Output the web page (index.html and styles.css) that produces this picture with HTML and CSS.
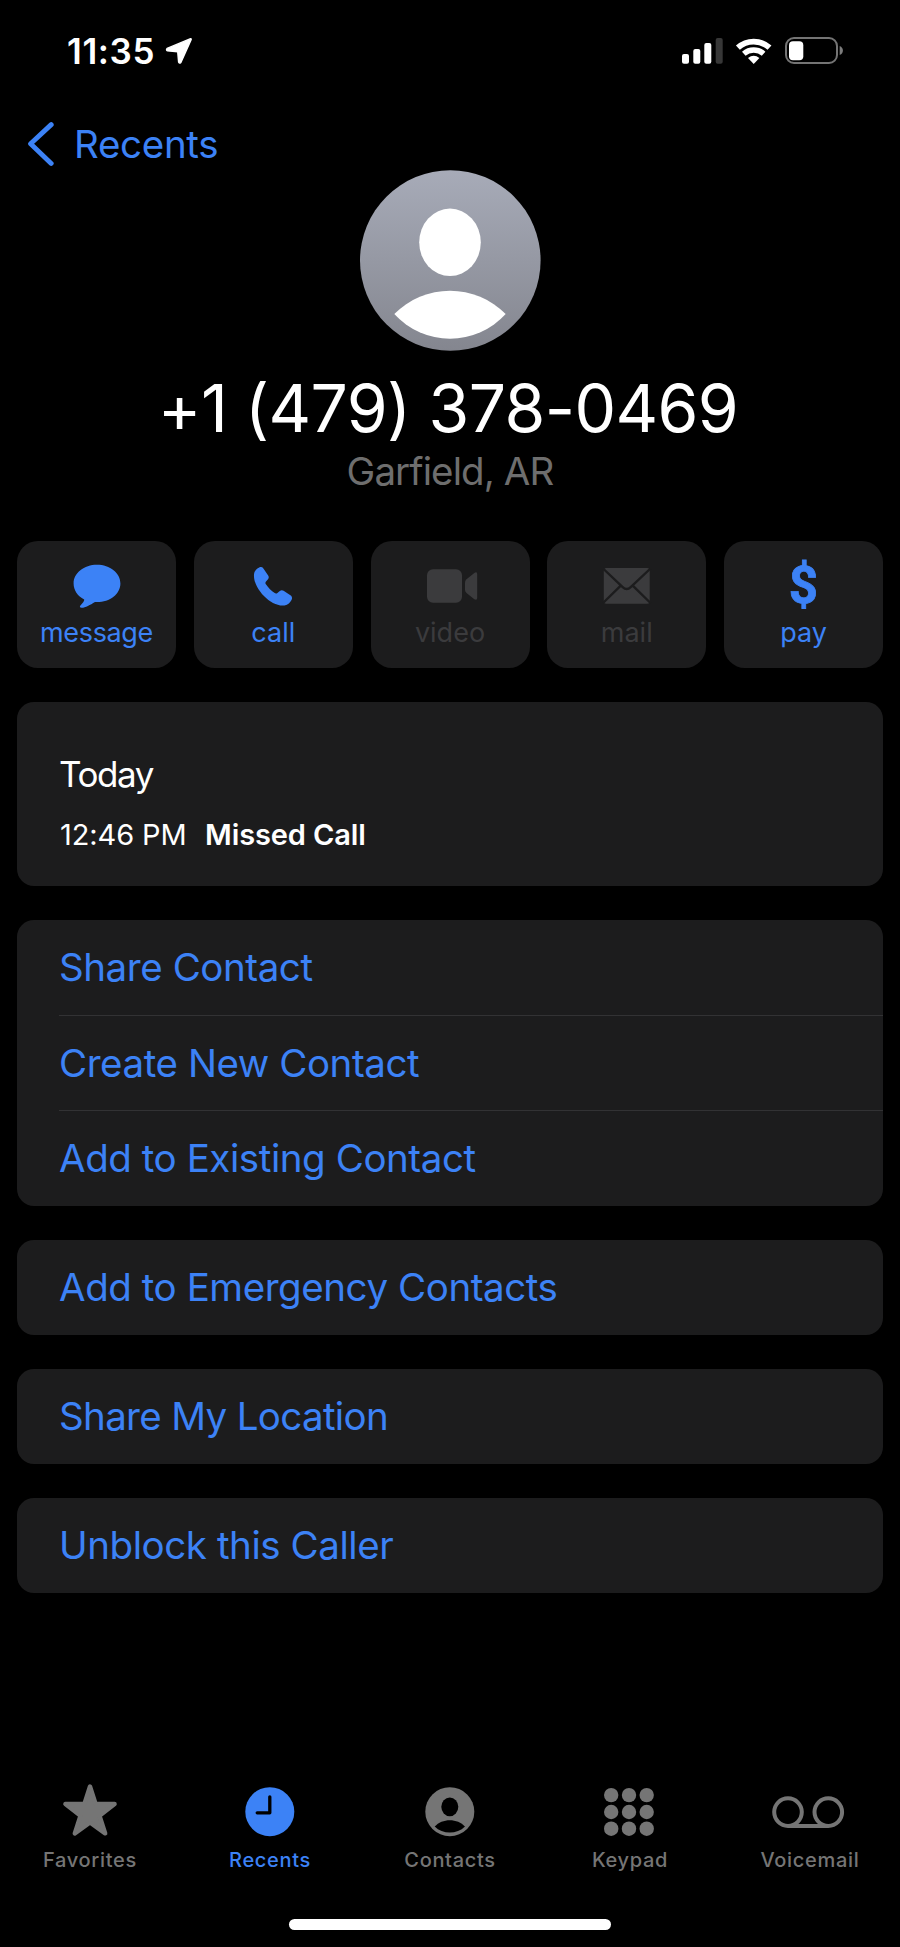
FILE: index.html
```html
<!DOCTYPE html>
<html lang="en">
<head>
<meta charset="utf-8">
<title>Recents</title>
<link rel="stylesheet" href="styles.css">
</head>
<body>
<div class="screen">
  <header class="status">
    <span class="time">11:35</span>
    <svg class="location" width="28" height="28" viewBox="0 0 28 28"><path d="M25.6 1.7 2.1 11.4Q.7 13 2.6 13.9L12.7 14.7 13.6 25Q14.3 27 15.9 25.4L26 3Q26.6 1.6 25.6 1.7Z" fill="#fff" stroke="#fff" stroke-width="1.4" stroke-linejoin="round"/></svg>
    <svg class="signals" width="162" height="28" viewBox="0 0 162 28">
      <g fill="#fff"><rect x="0" y="17" width="7" height="9.7" rx="2"/><rect x="11.3" y="12" width="7" height="14.7" rx="2"/><rect x="22.3" y="6" width="7" height="20.7" rx="2"/></g>
      <rect x="33.7" y="1" width="7" height="25.7" rx="2" fill="#373737"/>
      <g fill="none" stroke="#fff"><path d="M55.9 10.7A23.4 23.4 0 0 1 87.5 10.7" stroke-width="5.8"/><path d="M61.8 16.7A14.9 14.9 0 0 1 81.6 16.7" stroke-width="5.4"/></g>
      <path d="M71.7 27 66 21Q71.7 16.6 77.4 21Z" fill="#fff"/>
      <rect x="104" y="1" width="51" height="25" rx="8" fill="none" stroke="#747474" stroke-width="2"/>
      <rect x="107" y="4.3" width="14.3" height="19" rx="4" fill="#fff"/>
      <path d="M157.7 9Q160.9 10.5 160.9 13.5T157.7 18Z" fill="#7c7c7c"/>
    </svg>
  </header>
  <nav class="nav">
    <svg width="28" height="44" viewBox="0 0 28 44"><path d="M25.2 2.6 4.6 21.8 25.2 41.4" fill="none" stroke="#3c82f6" stroke-width="4.9" stroke-linecap="round" stroke-linejoin="round"/></svg>
    <span class="back">Recents</span>
  </nav>
  <section class="profile">
    <svg class="avatar" width="181" height="181" viewBox="0 0 181 181">
      <defs><linearGradient id="shade" x1="0" y1="0" x2="0" y2="1"><stop offset="0" stop-color="#a7abb8"/><stop offset="1" stop-color="#84868f"/></linearGradient></defs>
      <circle cx="90.3" cy="90.5" r="90.3" fill="url(#shade)"/>
      <ellipse cx="90" cy="72.3" rx="30.8" ry="33.7" fill="#fff"/>
      <path d="M34.3 144.1A78.200 78.200 0 0 1 145.700 144.100A75.500 75.500 0 0 1 34.300 144.100Z" fill="#fff"/>
    </svg>
    <h1 class="number">+1 (479) 378-0469</h1>
    <p class="place">Garfield, AR</p>
  </section>
  <section class="actions">
    <div class="action">
      <svg width="60" height="54" viewBox="0 0 60 54"><path d="M30 7.8C43 7.8 53.4 16 53.4 26.4S43 45.1 30 45.1L28 45C23 48 18 51 14.5 50.8Q12 50.3 13.4 48.4C15.5 46 17.5 44 17.2 42.4C10.5 39 6.6 33 6.6 26.4C6.6 16 17 7.8 30 7.8Z" fill="currentColor"/></svg>
      <span class="message">message</span>
    </div>
    <div class="action">
      <svg width="60" height="54" viewBox="0 0 60 54"><path d="M11 17.5C11.3 13.8 13.8 11.6 16.2 10.5C17.9 9.7 19.4 10.1 20.4 11.4L25 18.2C26 19.7 26 20.8 25 22.2L23 24.6C22.2 25.6 22.3 26.4 22.9 27.3C25.3 30.8 28.4 34 31.7 36C32.6 36.6 33.5 36.6 34.4 35.9L36.8 33.9C38 33 39.4 32.9 40.6 33.7L47.4 38.3C49.2 39.5 49.4 41.2 48.5 43C47.2 45.5 45 48 41.5 48.5C28 50.2 10 31.5 11 17.5Z" fill="currentColor"/></svg>
      <span>call</span>
    </div>
    <div class="action off">
      <svg width="60" height="54" viewBox="0 0 60 54"><rect x="7" y="12.3" width="35" height="33.4" rx="6" fill="currentColor"/><path d="M45 25.5Q45 23.5 46.5 22.2L54.3 15.9Q57.2 14.4 57.2 17V41Q57.2 43.6 54.3 42.3L46.5 36Q45 34.5 45 32.7Z" fill="currentColor"/></svg>
      <span>video</span>
    </div>
    <div class="action off">
      <svg width="60" height="54" viewBox="0 0 60 54"><rect x="6.8" y="11" width="45.9" height="35.7" rx="2.5" fill="currentColor"/><path d="M6 11.5 25.7 30.2Q29.7 34 33.7 30.2L53.5 11.5M6 46 23.5 28.8M53.5 46 36 28.8" fill="none" stroke="#1c1c1d" stroke-width="2.4"/></svg>
      <span>mail</span>
    </div>
    <div class="action">
      <span class="dollar">$</span>
      <span>pay</span>
    </div>
  </section>
  <section class="card history">
    <div class="day">Today</div>
    <div class="entry"><span class="when">12:46 PM</span><span class="what">Missed Call</span></div>
  </section>
  <section class="card">
    <div class="row"><span>Share Contact</span></div>
    <div class="row"><span>Create New Contact</span></div>
    <div class="row last"><span>Add to Existing Contact</span></div>
  </section>
  <section class="card"><div class="row"><span>Add to Emergency Contacts</span></div></section>
  <section class="card"><div class="row"><span class="share-location">Share My Location</span></div></section>
  <section class="card"><div class="row"><span>Unblock this Caller</span></div></section>
  <footer class="tabs">
    <div class="tab">
      <svg width="80" height="56" viewBox="0 0 80 56"><path d="M40 3.5 45.6 20.9H64.6L49.5 32.700 55.200 50.400 40 39.500 24.800 50.400 30.500 32.700 15.400 20.900H34.400Z" fill="currentColor" stroke="currentColor" stroke-width="4.4" stroke-linejoin="round"/></svg>
      <span>Favorites</span>
    </div>
    <div class="tab on">
      <svg width="80" height="56" viewBox="0 0 80 56"><circle cx="39.8" cy="28.7" r="24.5" fill="currentColor"/><path d="M39.8 13.8V29.8H27.2" fill="none" stroke="#000" stroke-width="3.3" stroke-linecap="round" stroke-linejoin="round"/></svg>
      <span>Recents</span>
    </div>
    <div class="tab">
      <svg width="80" height="56" viewBox="0 0 80 56"><circle cx="39.8" cy="28.7" r="24.5" fill="currentColor"/><ellipse cx="39.8" cy="23.8" rx="8.5" ry="9.4" fill="#000"/><path d="M24.7 43.5C32 35 47.6 35 55 43.5C47 51.5 32.5 51.5 24.7 43.5Z" fill="#000"/></svg>
      <span>Contacts</span>
    </div>
    <div class="tab">
      <svg width="80" height="56" viewBox="0 0 80 56"><g fill="currentColor"><circle cx="21.2" cy="12.1" r="7.2"/><circle cx="39" cy="12.1" r="7.2"/><circle cx="56.7" cy="12.1" r="7.2"/><circle cx="21.2" cy="29" r="7.2"/><circle cx="39" cy="29" r="7.2"/><circle cx="56.7" cy="29" r="7.2"/><circle cx="21.2" cy="45.7" r="7.2"/><circle cx="39" cy="45.7" r="7.2"/><circle cx="56.7" cy="45.7" r="7.2"/></g></svg>
      <span>Keypad</span>
    </div>
    <div class="tab">
      <svg width="80" height="56" viewBox="0 0 80 56"><g fill="none" stroke="currentColor" stroke-width="4"><circle cx="18" cy="29.1" r="13.8"/><circle cx="58.3" cy="29.1" r="13.8"/><path d="M18 42.9H58.3"/></g></svg>
      <span>Voicemail</span>
    </div>
  </footer>
  <div class="home"></div>
</div>
</body>
</html>
```
FILE: styles.css
```css
* { box-sizing: border-box; margin: 0; padding: 0; }
body { background: #000; font-family: Inter, "Liberation Sans", sans-serif; color: #fff; }
svg { display: block; flex: none; }
span, h1 { white-space: nowrap; }
.screen { width: 900px; height: 1947px; display: flex; flex-direction: column; background: #000; overflow: hidden; }
.status { height: 102px; display: flex; align-items: center; padding-left: 67px; }
.time { width: 98px; font-size: 35px; font-weight: 600; line-height: 42px; letter-spacing: 0.6px; }
.signals { margin-left: 489px; }
.nav { height: 52px; margin-top: 16px; padding-left: 26px; display: flex; align-items: center; gap: 20px; color: #3c82f6; }
.back { font-size: 38.5px; line-height: 46px; letter-spacing: -0.3px; padding-bottom: 1px; }
.profile { display: flex; flex-direction: column; align-items: center; }
.number { margin-top: 21px; padding-right: 4px; font-size: 66px; line-height: 72px; font-weight: 400; letter-spacing: -0.6px; }
.place { margin-top: 4px; font-size: 38.5px; line-height: 46px; color: #6e6e6e; letter-spacing: -0.9px; }
.actions { margin: 47px 17px 0; height: 127px; display: grid; grid-template-columns: repeat(5, 159px); justify-content: space-between; }
.action { padding-top: 16px; border-radius: 21px; background: #1c1c1d; color: #3c82f6; display: flex; flex-direction: column; align-items: center; font-size: 27px; line-height: 34px; gap: 5px; }
.message { letter-spacing: -0.35px; }
.off { color: #3b3b3d; }
.dollar { height: 54px; padding-top: 2px; font: 700 51px/54px Roboto, sans-serif; -webkit-text-stroke: 0.8px currentColor; }
.card { margin: 34px 17px 0; background: #1c1c1d; border-radius: 17px; flex: none; }
.history { height: 184px; padding: 51px 43px 0 42px; }
.day { font-size: 35px; line-height: 42px; letter-spacing: -1.4px; }
.entry { margin-top: 22px; padding-left: 1px; font-size: 29px; line-height: 36px; letter-spacing: -0.1px; display: flex; }
.when { width: 145px; }
.what { font-weight: 600; }
.row { height: 95px; margin-left: 42px; padding-bottom: 1px; display: flex; align-items: center; font-size: 38.5px; letter-spacing: -0.43px; color: #3c82f6; }
.row + .row { border-top: 1px solid #323234; }
.row.last { height: 96px; }
.share-location { letter-spacing: -0.66px; }
.tabs { margin-top: auto; display: grid; grid-template-columns: repeat(5, 1fr); color: #757575; }
.tab { display: flex; flex-direction: column; align-items: center; gap: 9px; font-size: 20px; line-height: 24px; font-weight: 500; letter-spacing: 0.68px; }
.on { color: #3c82f6; }
.home { width: 322px; height: 11px; margin: 47px auto 17px; border-radius: 6px; background: #fff; flex: none; }
```
